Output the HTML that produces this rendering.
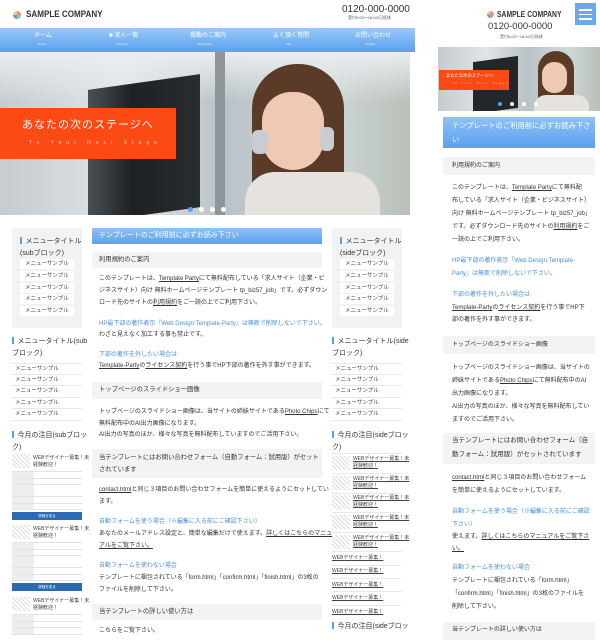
<!DOCTYPE html>
<html><head><meta charset="utf-8"><style>
*{margin:0;padding:0;box-sizing:border-box}
body{width:600px;height:635px;overflow:hidden;background:#fff;position:relative;font-family:"Liberation Sans","Noto Sans CJK JP",sans-serif;color:#333}
.a{position:absolute}
.t{position:absolute;white-space:nowrap;line-height:1}
.s{font-size:6px}
.b{color:#4a90d9}
u{text-decoration:underline}
.h3{position:absolute;background:#f3f3f3;font-size:6.5px;color:#333}
.mi{position:absolute;background:#fff;font-size:5.5px;color:#444;padding-left:5px;line-height:10px;height:10px}
.ml{position:absolute;font-size:5.5px;color:#444;padding-left:3px;line-height:11px;height:11.5px;border-bottom:1px solid #e8e8e8}
.ttl{position:absolute;font-size:7px;color:#333;line-height:12px;white-space:nowrap}
.ttl i{display:inline-block;width:1.5px;height:7px;background:#5a9de8;margin-right:4px;vertical-align:-1px}
.thumb{position:absolute;width:18px;height:14px;background:repeating-linear-gradient(45deg,#ddd 0 1px,#fff 1px 3px)}
.jt{position:absolute;font-size:5px;color:#444;line-height:7px}
.tb{position:absolute;border-top:1px solid #e3e3e3}
.tr{height:6.5px;border-bottom:1px solid #e3e3e3;font-size:3px;color:#666;position:relative;background:linear-gradient(90deg,#eee 0 22px,#fff 22px)}
.btn{position:absolute;background:#2d6ab5;height:8px;color:#fff;font-size:3.5px;text-align:center;line-height:8px}
</style></head><body>

<!-- ===== DESKTOP ===== -->
<div class="a" style="left:13px;top:11px;width:8px;height:8px;border-radius:50%;background:conic-gradient(#e88 0 25%,#8c8 0 50%,#88e 0 75%,#ec8 0)"></div>
<div class="t" style="left:26px;top:10px;font-size:9.5px;font-weight:bold;transform:scaleX(.85);transform-origin:left">SAMPLE COMPANY</div>
<div class="t" style="left:342px;top:5px;font-size:10px;color:#333">0120-000-0000</div>
<div class="t" style="left:348px;top:16px;font-size:4px;color:#555">受付9:00〜18:00/日祝休</div>

<div class="a" style="left:0;top:28px;width:415px;height:24px;background:linear-gradient(#99c9f8,#5aa0ef)"></div>
<div class="t" style="left:34px;top:33px;font-size:6px;color:#fff">ホーム</div>
<div class="t" style="left:38px;top:43px;font-size:3px;color:#eef">Home</div>
<div class="t" style="left:109px;top:33px;font-size:6px;color:#fff">■ 求人一覧</div>
<div class="t" style="left:116px;top:43px;font-size:3px;color:#eef">Jobs List</div>
<div class="t" style="left:190px;top:33px;font-size:6px;color:#fff">掲載のご案内</div>
<div class="t" style="left:197px;top:43px;font-size:3px;color:#eef">Information</div>
<div class="t" style="left:273px;top:33px;font-size:6px;color:#fff">よく頂く質問</div>
<div class="t" style="left:286px;top:43px;font-size:3px;color:#eef">Faq</div>
<div class="t" style="left:355px;top:33px;font-size:6px;color:#fff">お問い合わせ</div>
<div class="t" style="left:365px;top:43px;font-size:3px;color:#eef">Contact</div>

<!-- hero -->
<div class="a" style="left:0;top:52px;width:410px;height:163px;overflow:hidden;background:linear-gradient(90deg,#c5ccd0 0,#dfe5e8 30%,#b9c2c6 55%,#d0d8da 80%,#b8c0b8 100%)">
  <div class="a" style="left:0;top:0;width:410px;height:50px;background:linear-gradient(#e9eef0,rgba(230,235,237,0))"></div>
  <div class="a" style="left:88px;top:30px;width:112px;height:133px;background:linear-gradient(90deg,#4a5054,#1e2124 40%,#2a2d30);transform:skewY(-8deg)"></div>
  <div class="a" style="left:215px;top:0;width:10px;height:163px;background:#8f9699"></div>
  <div class="a" style="left:252px;top:12px;width:92px;height:160px;border-radius:45px 45px 10px 10px;background:#5a3b28"></div>
  <div class="a" style="left:262px;top:40px;width:62px;height:78px;border-radius:30px 30px 32px 32px;background:#efc9b3"></div>
  <div class="a" style="left:245px;top:120px;width:135px;height:50px;border-radius:30px 30px 0 0;background:#e6e3de"></div>
  <div class="a" style="left:252px;top:78px;width:16px;height:24px;border-radius:6px;background:#c9cdd2"></div>
  <div class="a" style="left:320px;top:75px;width:14px;height:24px;border-radius:6px;background:#c9cdd2"></div>
</div>
<div class="a" style="left:0;top:108px;width:176px;height:51px;background:#fb4a14"></div>
<div class="t" style="left:22px;top:120px;font-size:11px;color:#fff;letter-spacing:1px">あなたの次のステージへ</div>
<div class="t" style="left:29px;top:141px;font-size:5px;color:#ffcfb8;letter-spacing:5px">To Your Next Stage</div>
<div class="a" style="left:188px;top:207px;width:5px;height:5px;border-radius:50%;background:#5aa0ef"></div>
<div class="a" style="left:199px;top:207px;width:5px;height:5px;border-radius:50%;background:#fff"></div>
<div class="a" style="left:210px;top:207px;width:5px;height:5px;border-radius:50%;background:#fff"></div>
<div class="a" style="left:221px;top:207px;width:5px;height:5px;border-radius:50%;background:#fff"></div>

<!-- left sidebar -->
<div class="a" style="left:12px;top:228px;width:70px;height:100px;background:#f2f2f2"></div>
<div class="ttl" style="left:20px;top:236px"><i></i>メニュータイトル</div>
<div class="ttl" style="left:20px;top:248px">(subブロック)</div>
<div class="mi" style="left:20px;top:259px;width:54px">メニューサンプル</div>
<div class="mi" style="left:20px;top:271px;width:54px">メニューサンプル</div>
<div class="mi" style="left:20px;top:283px;width:54px">メニューサンプル</div>
<div class="mi" style="left:20px;top:294px;width:54px">メニューサンプル</div>
<div class="mi" style="left:20px;top:306px;width:54px">メニューサンプル</div>
<div class="ttl" style="left:12px;top:336px"><i></i>メニュータイトル(sub</div>
<div class="ttl" style="left:12px;top:348px">ブロック)</div>
<div class="ml" style="left:12px;top:363px;width:70px;border-top:1px solid #e8e8e8">メニューサンプル</div>
<div class="ml" style="left:12px;top:374.5px;width:70px">メニューサンプル</div>
<div class="ml" style="left:12px;top:386px;width:70px">メニューサンプル</div>
<div class="ml" style="left:12px;top:397.5px;width:70px">メニューサンプル</div>
<div class="ml" style="left:12px;top:409px;width:70px">メニューサンプル</div>
<div class="ttl" style="left:12px;top:430px"><i></i>今月の注目(subブロッ</div>
<div class="ttl" style="left:12px;top:442px">ク)</div>

<!-- job cards -->
<div class="thumb" style="left:12px;top:454px"></div>
<div class="jt" style="left:33px;top:455px">WEBデザイナー募集！未<br>経験歓迎！</div>
<div class="tb" style="left:12px;top:471px;width:70px">
<div class="tr"></div><div class="tr"></div><div class="tr" style="height:12px"></div><div class="tr"></div><div class="tr"></div></div>
<div class="btn" style="left:12px;top:512px;width:70px">詳細を見る</div>
<div class="thumb" style="left:12px;top:525px"></div>
<div class="jt" style="left:33px;top:526px">WEBデザイナー募集！未<br>経験歓迎！</div>
<div class="tb" style="left:12px;top:542px;width:70px">
<div class="tr"></div><div class="tr"></div><div class="tr" style="height:12px"></div><div class="tr"></div><div class="tr"></div></div>
<div class="btn" style="left:12px;top:583px;width:70px">詳細を見る</div>
<div class="thumb" style="left:12px;top:597px"></div>
<div class="jt" style="left:33px;top:598px">WEBデザイナー募集！未<br>経験歓迎！</div>
<div class="tb" style="left:12px;top:614px;width:70px">
<div class="tr"></div><div class="tr"></div><div class="tr"></div></div>

<!-- main desktop -->
<div class="a" style="left:92px;top:228px;width:230px;height:16px;background:linear-gradient(#8fc2f6,#5aa0ef)"></div>
<div class="t" style="left:99px;top:232px;font-size:7px;color:#fff">テンプレートのご利用前に必ずお読み下さい</div>
<div class="h3" style="left:92px;top:252px;width:230px;height:16px"></div>
<div class="t" style="left:99px;top:257px;font-size:6.3px">利用規約のご案内</div>
<div class="t s" style="left:99px;top:276px">このテンプレートは、<u>Template Party</u>にて無料配布している「求人サイト（企業・ビ</div>
<div class="t s" style="left:99px;top:288px">ジネスサイト）向け 無料ホームページテンプレート tp_biz57_job」です。必ずダウン</div>
<div class="t s" style="left:99px;top:300px">ロード先のサイトの<u>利用規約</u>をご一読の上でご利用下さい。</div>
<div class="t s b" style="left:99px;top:321px">HP最下部の著作表示『Web Design:Template-Party』は無断で削除しないで下さい。</div>
<div class="t s" style="left:99px;top:332px">わざと見えなく加工する事も禁止です。</div>
<div class="t s b" style="left:99px;top:352px">下部の著作を外したい場合は</div>
<div class="t s" style="left:99px;top:363px"><u>Template-Party</u>の<u>ライセンス契約</u>を行う事でHP下部の著作を外す事ができます。</div>
<div class="h3" style="left:92px;top:382px;width:230px;height:17px"></div>
<div class="t" style="left:99px;top:387px;font-size:6.3px">トップページのスライドショー画像</div>
<div class="t s" style="left:99px;top:409px">トップページのスライドショー画像は、当サイトの姉妹サイトである<u>Photo Chips</u>にて</div>
<div class="t s" style="left:99px;top:421px">無料配布中のAI出力画像になります。</div>
<div class="t s" style="left:99px;top:432px">AI出力の写真のほか、様々な写真を無料配布していますのでご活用下さい。</div>
<div class="h3" style="left:92px;top:449px;width:230px;height:29px"></div>
<div class="t" style="left:99px;top:455px;font-size:6.3px">当テンプレートにはお問い合わせフォーム（自動フォーム：試用版）がセット</div>
<div class="t" style="left:99px;top:467px;font-size:6.3px">されています</div>
<div class="t s" style="left:99px;top:487px"><u>contact.html</u>と同じ３項目のお問い合わせフォームを簡単に使えるようにセットしてい</div>
<div class="t s" style="left:99px;top:499px">ます。</div>
<div class="t s b" style="left:99px;top:519px">自動フォームを使う場合（※編集に入る前にご確認下さい）</div>
<div class="t s" style="left:99px;top:531px">あなたのメールアドレス設定と、簡単な編集だけで使えます。<u>詳しくはこちらのマニュ</u></div>
<div class="t s" style="left:99px;top:543px"><u>アルをご覧下さい。</u></div>
<div class="t s b" style="left:99px;top:563px">自動フォームを使わない場合</div>
<div class="t s" style="left:99px;top:575px">テンプレートに梱包されている「form.html」「confirm.html」「finish.html」の3枚の</div>
<div class="t s" style="left:99px;top:587px">ファイルを削除して下さい。</div>
<div class="h3" style="left:92px;top:604px;width:230px;height:16px"></div>
<div class="t" style="left:99px;top:609px;font-size:6.3px">当テンプレートの詳しい使い方は</div>
<div class="t s" style="left:99px;top:628px">こちらをご覧下さい。</div>

<!-- right sidebar -->
<div class="a" style="left:332px;top:228px;width:70px;height:100px;background:#f2f2f2"></div>
<div class="ttl" style="left:340px;top:236px"><i></i>メニュータイトル</div>
<div class="ttl" style="left:340px;top:248px">(sideブロック)</div>
<div class="mi" style="left:340px;top:259px;width:54px">メニューサンプル</div>
<div class="mi" style="left:340px;top:271px;width:54px">メニューサンプル</div>
<div class="mi" style="left:340px;top:283px;width:54px">メニューサンプル</div>
<div class="mi" style="left:340px;top:294px;width:54px">メニューサンプル</div>
<div class="mi" style="left:340px;top:306px;width:54px">メニューサンプル</div>
<div class="ttl" style="left:332px;top:336px"><i></i>メニュータイトル(side</div>
<div class="ttl" style="left:332px;top:348px">ブロック)</div>
<div class="ml" style="left:332px;top:363px;width:70px;border-top:1px solid #e8e8e8">メニューサンプル</div>
<div class="ml" style="left:332px;top:374.5px;width:70px">メニューサンプル</div>
<div class="ml" style="left:332px;top:386px;width:70px">メニューサンプル</div>
<div class="ml" style="left:332px;top:397.5px;width:70px">メニューサンプル</div>
<div class="ml" style="left:332px;top:409px;width:70px">メニューサンプル</div>
<div class="ttl" style="left:332px;top:430px"><i></i>今月の注目(sideブロッ</div>
<div class="ttl" style="left:332px;top:442px">ク)</div>
<div class="a" style="left:332px;top:453px;width:70px;border-top:1px solid #e8e8e8"></div>
<div class="thumb" style="left:332px;top:456px"></div><div class="jt" style="left:353px;top:456px;text-decoration:underline">WEBデザイナー募集！未<br>経験歓迎！</div>
<div class="a" style="left:332px;top:473px;width:70px;border-top:1px solid #e8e8e8"></div>
<div class="thumb" style="left:332px;top:476px"></div><div class="jt" style="left:353px;top:476px;text-decoration:underline">WEBデザイナー募集！未<br>経験歓迎！</div>
<div class="a" style="left:332px;top:493px;width:70px;border-top:1px solid #e8e8e8"></div>
<div class="thumb" style="left:332px;top:495px"></div><div class="jt" style="left:353px;top:495px;text-decoration:underline">WEBデザイナー募集！未<br>経験歓迎！</div>
<div class="a" style="left:332px;top:512px;width:70px;border-top:1px solid #e8e8e8"></div>
<div class="thumb" style="left:332px;top:515px"></div><div class="jt" style="left:353px;top:515px;text-decoration:underline">WEBデザイナー募集！未<br>経験歓迎！</div>
<div class="a" style="left:332px;top:532px;width:70px;border-top:1px solid #e8e8e8"></div>
<div class="thumb" style="left:332px;top:535px"></div><div class="jt" style="left:353px;top:535px;text-decoration:underline">WEBデザイナー募集！未<br>経験歓迎！</div>
<div class="a" style="left:332px;top:551px;width:70px;border-top:1px solid #e8e8e8"></div>
<div class="jt" style="left:332px;top:555px;text-decoration:underline">WEBデザイナー募集！</div>
<div class="a" style="left:332px;top:565px;width:70px;border-top:1px solid #e8e8e8"></div>
<div class="jt" style="left:332px;top:568px;text-decoration:underline">WEBデザイナー募集！</div>
<div class="a" style="left:332px;top:578px;width:70px;border-top:1px solid #e8e8e8"></div>
<div class="jt" style="left:332px;top:582px;text-decoration:underline">WEBデザイナー募集！</div>
<div class="a" style="left:332px;top:591px;width:70px;border-top:1px solid #e8e8e8"></div>
<div class="jt" style="left:332px;top:595px;text-decoration:underline">WEBデザイナー募集！</div>
<div class="a" style="left:332px;top:605px;width:70px;border-top:1px solid #e8e8e8"></div>
<div class="jt" style="left:332px;top:609px;text-decoration:underline">WEBデザイナー募集！</div>
<div class="ttl" style="left:332px;top:621px"><i></i>今月の注目(sideブロッ</div>

<!-- ===== MOBILE ===== -->
<div class="a" style="left:487px;top:11px;width:7px;height:7px;border-radius:50%;background:conic-gradient(#e88 0 25%,#8c8 0 50%,#88e 0 75%,#ec8 0)"></div>
<div class="t" style="left:497px;top:10px;font-size:8.3px;font-weight:bold;transform:scaleX(.82);transform-origin:left">SAMPLE COMPANY</div>
<div class="a" style="left:575px;top:3px;width:21px;height:22px;background:#6aa9ee"></div>
<div class="a" style="left:579px;top:9px;width:13px;height:1.5px;background:#fff"></div>
<div class="a" style="left:579px;top:13.5px;width:13px;height:1.5px;background:#fff"></div>
<div class="a" style="left:579px;top:18px;width:13px;height:1.5px;background:#fff"></div>
<div class="t" style="left:488px;top:22px;font-size:9.5px">0120-000-0000</div>
<div class="t" style="left:500px;top:35px;font-size:4px;color:#555">受付9:00〜18:00/日祝休</div>

<div class="a" style="left:438px;top:47px;width:162px;height:64px;overflow:hidden;background:linear-gradient(90deg,#c5ccd0,#dfe5e8 30%,#b9c2c6 55%,#d0d8da 80%,#b8c0b8)">
  <div class="a" style="left:35px;top:12px;width:45px;height:52px;background:#24272a;transform:skewY(-8deg)"></div>
  <div class="a" style="left:100px;top:4px;width:36px;height:64px;border-radius:18px 18px 4px 4px;background:#5a3b28"></div>
  <div class="a" style="left:104px;top:15px;width:25px;height:31px;border-radius:12px;background:#efc9b3"></div>
  <div class="a" style="left:96px;top:48px;width:55px;height:20px;border-radius:12px 12px 0 0;background:#e6e3de"></div>
</div>
<div class="a" style="left:439px;top:70px;width:70px;height:20px;background:#fb4a14"></div>
<div class="t" style="left:446px;top:74px;font-size:4.3px;color:#fff">あなたの次のステージへ</div>
<div class="t" style="left:452px;top:83px;font-size:2.5px;color:#ffcfb8;letter-spacing:2px">To Your Next Stage</div>
<div class="a" style="left:498px;top:102px;width:4px;height:4px;border-radius:50%;background:#5aa0ef"></div>
<div class="a" style="left:510px;top:102px;width:4px;height:4px;border-radius:50%;background:#fff"></div>
<div class="a" style="left:522px;top:102px;width:4px;height:4px;border-radius:50%;background:#fff"></div>
<div class="a" style="left:534px;top:102px;width:4px;height:4px;border-radius:50%;background:#fff"></div>

<div class="a" style="left:443px;top:117px;width:152px;height:31px;background:linear-gradient(#8fc2f6,#5aa0ef)"></div>
<div class="t" style="left:452px;top:122px;font-size:7.3px;color:#fff">テンプレートのご利用前に必ずお読み下さ</div>
<div class="t" style="left:452px;top:136px;font-size:7.3px;color:#fff">い</div>
<div class="h3" style="left:443px;top:157px;width:152px;height:18px"></div>
<div class="t" style="left:452px;top:163px;font-size:6px">利用規約のご案内</div>
<div class="t s" style="left:452px;top:185px">このテンプレートは、<u>Template Party</u>にて無料配</div>
<div class="t s" style="left:452px;top:198px">布している「求人サイト（企業・ビジネスサイト）</div>
<div class="t s" style="left:452px;top:211px">向け 無料ホームページテンプレート tp_biz57_job」</div>
<div class="t s" style="left:452px;top:224px">です。必ずダウンロード先のサイトの<u>利用規約</u>をご</div>
<div class="t s" style="left:452px;top:237px">一読の上でご利用下さい。</div>
<div class="t s b" style="left:452px;top:258px">HP最下部の著作表示『Web Design:Template-</div>
<div class="t s b" style="left:452px;top:271px">Party』は無断で削除しないで下さい。</div>
<div class="t s b" style="left:452px;top:292px">下部の著作を外したい場合は</div>
<div class="t s" style="left:452px;top:305px"><u>Template-Party</u>の<u>ライセンス契約</u>を行う事でHP下</div>
<div class="t s" style="left:452px;top:317px">部の著作を外す事ができます。</div>
<div class="h3" style="left:443px;top:336px;width:152px;height:18px"></div>
<div class="t" style="left:452px;top:342px;font-size:6px">トップページのスライドショー画像</div>
<div class="t s" style="left:452px;top:365px">トップページのスライドショー画像は、当サイトの</div>
<div class="t s" style="left:452px;top:378px">姉妹サイトである<u>Photo Chips</u>にて無料配布中のAI</div>
<div class="t s" style="left:452px;top:391px">出力画像になります。</div>
<div class="t s" style="left:452px;top:404px">AI出力の写真のほか、様々な写真を無料配布してい</div>
<div class="t s" style="left:452px;top:417px">ますのでご活用下さい。</div>
<div class="h3" style="left:443px;top:433px;width:152px;height:31px"></div>
<div class="t" style="left:452px;top:438px;font-size:6.5px">当テンプレートにはお問い合わせフォーム（自</div>
<div class="t" style="left:452px;top:452px;font-size:6.5px">動フォーム：試用版）がセットされています</div>
<div class="t s" style="left:452px;top:475px"><u>contact.html</u>と同じ３項目のお問い合わせフォーム</div>
<div class="t s" style="left:452px;top:488px">を簡単に使えるようにセットしています。</div>
<div class="t s b" style="left:452px;top:509px">自動フォームを使う場合（※編集に入る前にご確認</div>
<div class="t s b" style="left:452px;top:522px">下さい）</div>
<div class="t s" style="left:452px;top:534px">使えます。<u>詳しくはこちらのマニュアルをご覧下さ</u></div>
<div class="t s" style="left:452px;top:546px"><u>い。</u></div>
<div class="t s b" style="left:452px;top:565px">自動フォームを使わない場合</div>
<div class="t s" style="left:452px;top:578px">テンプレートに梱包されている「form.html」</div>
<div class="t s" style="left:452px;top:591px">「confirm.html」「finish.html」の3枚のファイルを</div>
<div class="t s" style="left:452px;top:604px">削除して下さい。</div>
<div class="h3" style="left:443px;top:622px;width:152px;height:18px"></div>
<div class="t" style="left:452px;top:627px;font-size:6px">当テンプレートの詳しい使い方は</div>
</body></html>
